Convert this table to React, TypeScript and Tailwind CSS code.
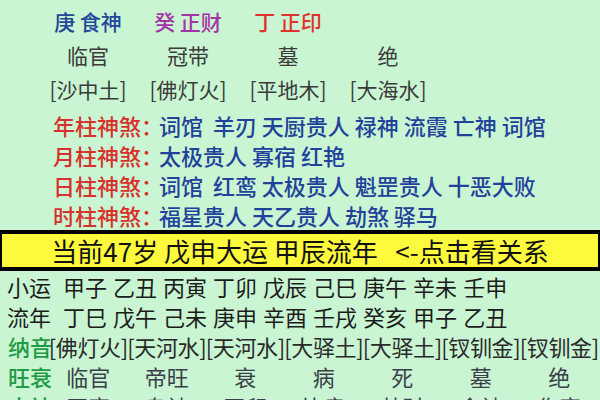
const pillars = [
  { gan: '庚', god: '食神', color: 'text-[#23479a]' },
  { gan: '癸', god: '正财', color: 'text-[#a433a6]' },
  { gan: '丁', god: '正印', color: 'text-[#e0322e]' },
];

const stages = ['临官', '冠带', '墓', '绝'];
const nayin = ['[沙中土]', '[佛灯火]', '[平地木]', '[大海水]'];

const shensha = [
  { label: '年柱神煞：', items: '词馆  羊刃 天厨贵人 禄神 流霞 亡神 词馆' },
  { label: '月柱神煞：', items: '太极贵人 寡宿 红艳' },
  { label: '日柱神煞：', items: '词馆  红鸾 太极贵人 魁罡贵人 十恶大败' },
  { label: '时柱神煞：', items: '福星贵人 天乙贵人 劫煞 驿马' },
];

const xiaoyun = ['甲子', '乙丑', '丙寅', '丁卯', '戊辰', '己巳', '庚午', '辛未', '壬申'];
const liunian = ['丁巳', '戊午', '己未', '庚申', '辛酉', '壬戌', '癸亥', '甲子', '乙丑'];
const dayunNayin = ['佛灯火', '天河水', '天河水', '大驿土', '大驿土', '钗钏金', '钗钏金'];
const wangshuai = ['临官', '帝旺', '衰', '病', '死', '墓', '绝'];
const shishen = ['正官', '枭神', '正印', '比肩', '劫财', '食神', '伤官'];

function PlainRow({ label, items }: { label: string; items: string[] }) {
  return (
    <div className="flex h-[30px] items-center pl-[7px] text-[#1c1c1c]">
      <span className="w-[56px] shrink-0">{label}</span>
      <div className="flex gap-[6px]">
        {items.map((it, i) => (
          <span key={i}>{it}</span>
        ))}
      </div>
    </div>
  );
}

function GridRow({ label, items, bracket }: { label: string; items: string[]; bracket?: boolean }) {
  return (
    <div className="grid h-[30px] grid-cols-[41px_repeat(7,78.5px)] items-center pl-[8px] whitespace-nowrap">
      <span className="text-[#1f9a45] font-medium">{label}</span>
      {items.map((it, i) => (
        <span key={i} className={`flex justify-center ${bracket ? 'text-[#2a2a2a] tracking-[-0.4px]' : 'text-[#3a3f4a]'}`}>
          {bracket ? `[${it}]` : it}
        </span>
      ))}
    </div>
  );
}

export default function App() {
  return (
    <div className="h-[400px] w-[600px] overflow-hidden bg-[#c9f5d2] font-['Noto_Sans_CJK_SC',sans-serif] text-[22px] leading-none">
      {/* 四柱 */}
      <div className="pl-[38px] pt-[4px] text-[21px]">
        <div className="grid h-[34px] grid-cols-[repeat(4,100px)] items-center text-center font-medium">
          {pillars.map((p) => (
            <span key={p.gan} className={p.color}>
              {p.gan} {p.god}
            </span>
          ))}
        </div>
        <div className="grid h-[34px] grid-cols-[repeat(4,100px)] items-center text-center text-[#3b3b3b]">
          {stages.map((s) => (
            <span key={s}>{s}</span>
          ))}
        </div>
        <div className="grid h-[34px] grid-cols-[repeat(4,100px)] items-center text-center text-[#3b3b3b]">
          {nayin.map((n) => (
            <span key={n}>{n}</span>
          ))}
        </div>
      </div>

      {/* 神煞 */}
      <div className="mt-[4px] pl-[53px] font-medium">
        {shensha.map((s) => (
          <div key={s.label} className="flex h-[30px] items-center whitespace-pre">
            <span className="text-[#d8302c]">{s.label}</span>
            <span className="-ml-[4px] text-[#22419a]">{s.items}</span>
          </div>
        ))}
      </div>

      {/* 大运 bar */}
      <div className="flex h-[41px] items-center justify-center border-x-2 border-y-4 border-black bg-[#fdf93c] text-[26px] text-[#111] whitespace-pre">
        当前47岁 戊申大运 甲辰流年   {'<-'}点击看关系
      </div>

      {/* 小运 / 流年 */}
      <PlainRow label="小运" items={xiaoyun} />
      <PlainRow label="流年" items={liunian} />
      <GridRow label="纳音" items={dayunNayin} bracket />
      <GridRow label="旺衰" items={wangshuai} />
      <GridRow label="十神" items={shishen} />
    </div>
  );
}
